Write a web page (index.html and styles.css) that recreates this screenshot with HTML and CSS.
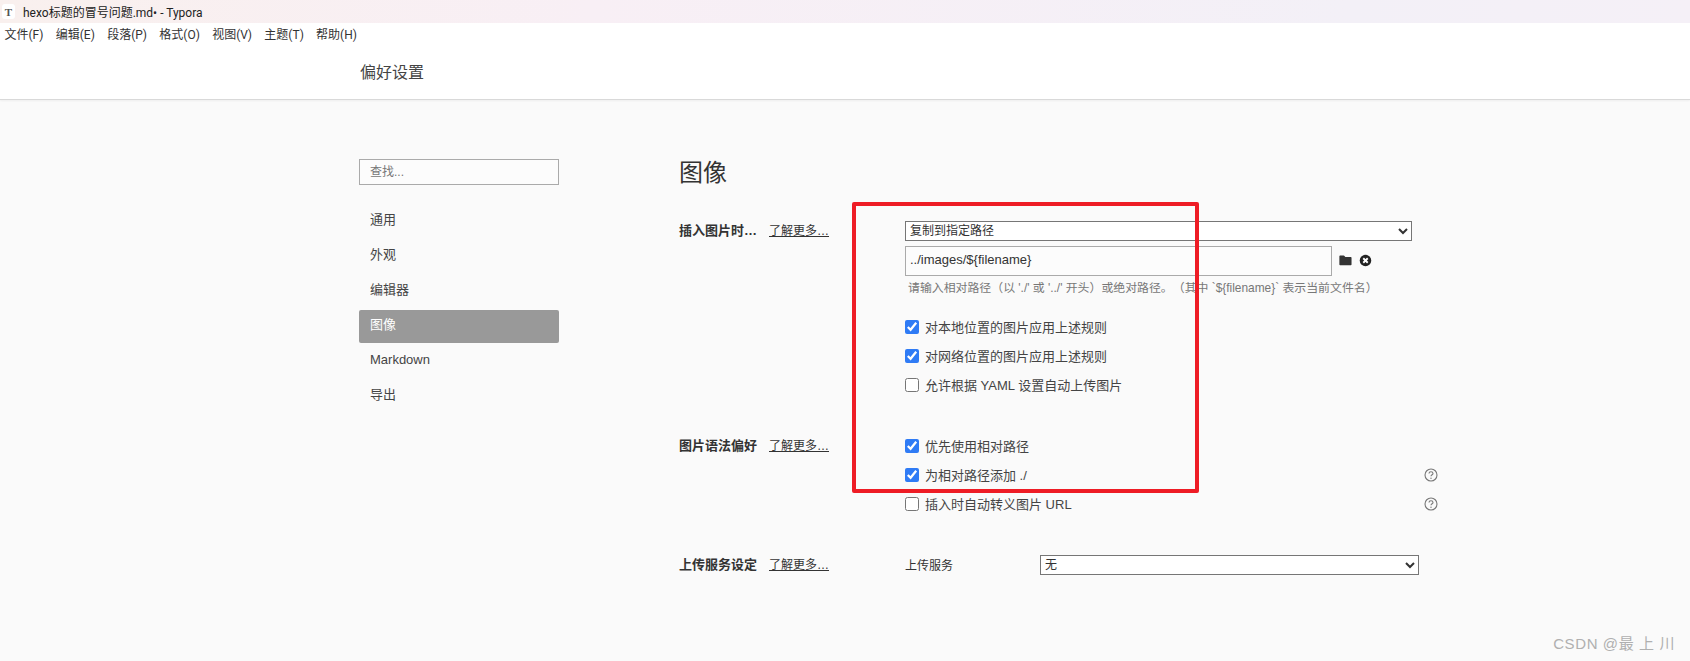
FILE: index.html
```html
<!DOCTYPE html>
<html lang="zh">
<head>
<meta charset="utf-8">
<title>Typora</title>
<link rel="stylesheet" href="styles.css">
</head>
<body>
<div class="titlebar">
  <span class="app-icon">T</span>
  <span class="title-text">hexo标题的冒号问题.md• - Typora</span>
</div>
<nav class="menubar">
  <span>文件(F)</span><span>编辑(E)</span><span>段落(P)</span><span>格式(O)</span><span>视图(V)</span><span>主题(T)</span><span>帮助(H)</span>
</nav>
<header class="pref-header">偏好设置</header>
<main class="pref-main">
  <aside class="sidebar">
    <input class="search" type="text" placeholder="查找...">
    <ul class="nav">
      <li>通用</li>
      <li>外观</li>
      <li>编辑器</li>
      <li class="active">图像</li>
      <li>Markdown</li>
      <li>导出</li>
    </ul>
  </aside>
  <section class="content">
    <h1 class="heading">图像</h1>
    <div class="group group-insert">
      <div class="label-col"><b>插入图片时…</b><a class="more">了解更多…</a></div>
      <div class="ctrl-col">
        <select class="select wide"><option>复制到指定路径</option></select>
        <div class="path-row">
          <input class="path" type="text" value="../images/${filename}">
          <svg class="ico" viewBox="0 0 14 12" aria-hidden="true"><path d="M1.200 .6h3.800c.4 0 .7.2.9.5l.9 1.200h5.900c.5 0 .8.3.8.8v7.300c0 .5-.3.8-.8.8H1.200c-.5 0-.8-.3-.8-.8V1.400c0-.5.3-.8.8-.8z" fill="#333"/></svg>
          <svg class="ico" viewBox="0 0 14 14" aria-hidden="true"><circle cx="7" cy="7" r="6.200" fill="#222"/><path d="M4.600 4.600l4.800 4.800M9.400 4.600l-4.800 4.800" stroke="#fff" stroke-width="2"/></svg>
        </div>
        <p class="hint">请输入相对路径（以 './' 或 '../' 开头）或绝对路径。（其中 `${filename}` 表示当前文件名）</p>
        <label class="check first"><input type="checkbox" checked>对本地位置的图片应用上述规则</label>
        <label class="check"><input type="checkbox" checked>对网络位置的图片应用上述规则</label>
        <label class="check"><input type="checkbox">允许根据 YAML 设置自动上传图片</label>
      </div>
    </div>
    <div class="group group-syntax">
      <div class="label-col"><b>图片语法偏好</b><a class="more">了解更多…</a></div>
      <div class="ctrl-col">
        <label class="check"><input type="checkbox" checked>优先使用相对路径</label>
        <label class="check"><input type="checkbox" checked>为相对路径添加 ./
          <svg class="help" viewBox="0 0 14 14" aria-hidden="true"><circle cx="7" cy="7" r="6" fill="none" stroke="#777" stroke-width="1.100"/><path d="M5 5.500c0-1.100.9-1.800 2-1.800s2 .7 2 1.700c0 1.300-2 1.400-2 2.900" fill="none" stroke="#777" stroke-width="1.100"/><circle cx="7" cy="10.200" r=".7" fill="#777"/></svg>
        </label>
        <label class="check"><input type="checkbox">插入时自动转义图片 URL
          <svg class="help" viewBox="0 0 14 14" aria-hidden="true"><circle cx="7" cy="7" r="6" fill="none" stroke="#777" stroke-width="1.100"/><path d="M5 5.500c0-1.100.9-1.800 2-1.800s2 .7 2 1.700c0 1.300-2 1.400-2 2.900" fill="none" stroke="#777" stroke-width="1.100"/><circle cx="7" cy="10.200" r=".7" fill="#777"/></svg>
        </label>
      </div>
    </div>
    <div class="group group-upload">
      <div class="label-col"><b>上传服务设定</b><a class="more">了解更多…</a></div>
      <div class="upload-row">
        <span class="upload-label">上传服务</span>
        <select class="select upload"><option>无</option></select>
      </div>
    </div>
  </section>
</main>
<div class="annotation"></div>
<div class="watermark">CSDN @最 上 川</div>
</body>
</html>
```
FILE: styles.css
```css
* { box-sizing: border-box; }
html, body { margin: 0; padding: 0; }
body {
  width: 1690px;
  height: 661px;
  overflow: hidden;
  position: relative;
  background: #fafafa;
  color: #333;
  font-family: "Liberation Sans", "Noto Sans CJK SC", sans-serif;
  font-size: 13px;
  text-spacing-trim: space-all;
}
.titlebar {
  height: 23px;
  display: flex;
  align-items: center;
  padding-left: 2px;
  background: linear-gradient(90deg, #f9f0ee 0%, #f8eff5 35%, #f3f0f7 80%, #f5f0f7 100%);
  color: #222;
  font-family: Roboto, "Noto Sans CJK SC", sans-serif;
  font-size: 12px;
}
.app-icon {
  width: 13px;
  height: 15px;
  margin-right: 8px;
  background: #fff;
  border-radius: 3px;
  display: flex;
  align-items: center;
  justify-content: center;
  font-family: "Liberation Serif", serif;
  font-weight: 700;
  font-size: 11px;
  color: #555;
}
.menubar {
  height: 23px;
  background: #fff;
  display: flex;
  align-items: center;
  gap: 12.300px;
  padding: 0 0 2px 4.500px;
  color: #333;
  font-family: Roboto, "Noto Sans CJK SC", sans-serif;
  font-size: 12px;
}
.pref-header {
  height: 54px;
  background: #fff;
  border-bottom: 1px solid #d9d9d9;
  box-shadow: 0 1px 2px rgba(0,0,0,.05);
  padding: 17px 0 0 360px;
  font-size: 16px;
  line-height: 20px;
  color: #444;
}
.pref-main {
  display: flex;
  padding-left: 359px;
}
.sidebar {
  width: 200px;
  padding-top: 59px;
}
.search {
  display: block;
  width: 200px;
  height: 26px;
  border: 1px solid #aaa;
  background: #fcfcfc;
  padding: 0 10px;
  font: 12px "Liberation Sans", "Noto Sans CJK SC", sans-serif;
  outline: 0;
}
.search::placeholder { color: #777; }
.nav {
  list-style: none;
  margin: 20px 0 0;
  padding: 0;
}
.nav li {
  height: 33px;
  margin-bottom: 2px;
  padding: 0 11px;
  line-height: 30px;
  color: #444;
}
.nav .active {
  background: #999;
  color: #fff;
  border-radius: 2px;
}
.content {
  margin-left: 120px;
  width: 760px;
}
.heading {
  margin: 57px 0 0;
  font-size: 24px;
  line-height: 32px;
  font-weight: 400;
  color: #333;
}
.group { display: flex; }
.group-insert { margin-top: 32px; }
.group-syntax { margin-top: 32px; }
.group-upload { margin-top: 36px; }
.label-col {
  width: 226px;
  flex: none;
  display: flex;
  align-items: flex-start;
  line-height: 20px;
}
.group-syntax .label-col { padding-top: 5px; }
.group-upload .label-col { padding-top: 1px; }
.label-col b { width: 90px; flex: none; font-weight: 700; color: #333; }
.more { text-decoration: underline; color: #333; font-size: 12px; }
.ctrl-col { width: 533px; }
.select {
  display: block;
  height: 20px;
  padding: 0;
  border: 1px solid #767676;
  border-radius: 0;
  background-color: #fff;
  color: #333;
  font: 12px "Liberation Sans", "Noto Sans CJK SC", sans-serif;
}
.wide { width: 507px; }
.path-row {
  display: flex;
  align-items: center;
  margin-top: 5px;
  height: 30px;
}
.path {
  width: 427px;
  height: 30px;
  border: 1px solid #aaa;
  background: #fcfcfc;
  padding: 0 4px 3px;
  font: 13px "Liberation Sans", "Noto Sans CJK SC", sans-serif;
  color: #333;
  outline: 0;
  margin-right: 7px;
}
.ico { width: 13px; height: 13px; margin: 0 7px 2px 0; flex: none; }
.hint {
  margin: 4px 0 0 3px;
  height: 18px;
  line-height: 16px;
  font-size: 11.900px;
  color: #777;
  white-space: nowrap;
}
.check {
  display: flex;
  align-items: center;
  height: 29px;
  color: #444;
}
.check.first { margin-top: 14px; }
.check input {
  width: 14px;
  height: 14px;
  margin: 0 6px 0 0;
  accent-color: #2f7bf5;
}
.help { width: 14px; height: 14px; margin-left: auto; margin-right: 0; }
.upload-row { display: flex; align-items: center; }
.upload-label { width: 135px; font-size: 12px; }
.upload { width: 379px; }
.annotation {
  position: absolute;
  left: 852px;
  top: 202px;
  width: 347px;
  height: 291px;
  border: 4px solid #ee1c25;
  border-radius: 2px;
}
.watermark {
  position: absolute;
  right: 15px;
  top: 632px;
  font-size: 15px;
  letter-spacing: .6px;
  color: #b0b0b0;
}
```
